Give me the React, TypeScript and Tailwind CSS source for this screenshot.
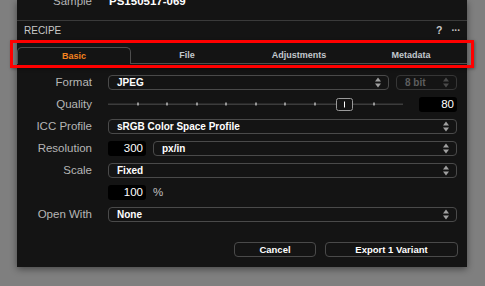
import React from "react";

const Arrows = ({ dim = false }: { dim?: boolean }) => (
  <svg width="6" height="11" viewBox="0 0 6 11" className="shrink-0">
    <polygon points="0,4.5 3,0.5 6,4.5" fill={dim ? "#4a4a4a" : "#a0a0a0"} />
    <polygon points="0,6.5 3,10.5 6,6.5" fill={dim ? "#4a4a4a" : "#a0a0a0"} />
  </svg>
);

const Select = ({ text, className = "" }: { text: string; className?: string }) => (
  <div
    className={`h-[15px] flex items-center justify-between pl-[8px] pr-[7px] border border-[#4a4a4a] rounded-[4px] text-white font-bold text-[10px] leading-none ${className}`}
  >
    <span>{text}</span>
    <Arrows />
  </div>
);

const NumBox = ({ text }: { text: string }) => (
  <div className="w-[38px] h-[15px] bg-black rounded-[3px] flex items-center justify-end pr-[3px] text-white text-[11.5px] leading-none">
    {text}
  </div>
);

const Row = ({ label, children }: { label: string; children: React.ReactNode }) => (
  <div className="h-[15px] flex items-center">
    <div className="w-[75px] text-right text-[#b6b6b6] text-[11.5px] leading-none">{label}</div>
    <div className="ml-[16px] w-[349px] flex items-center">{children}</div>
  </div>
);

const Slider = () => {
  const ticks = [1, 2, 3, 4, 5, 6, 7, 9];
  return (
    <svg width="295" height="15" viewBox="0 0 295 15" className="shrink-0">
      <rect x="0" y="6.5" width="295" height="1.5" fill="#3c3c3c" />
      {ticks.map((t) => (
        <rect key={t} x={Math.round(t * 29.5) - 0.5} y="5.5" width="1" height="3" fill="#ffffff" />
      ))}
      <rect x="228.5" y="1.5" width="16" height="12" rx="2" fill="#141414" stroke="#9a9a9a" strokeWidth="1" />
      <rect x="236" y="4.5" width="1" height="6" fill="#ffffff" />
    </svg>
  );
};

export default function App() {
  const tabs = ["Basic", "File", "Adjustments", "Metadata"];
  return (
    <div className="w-[485px] h-[286px] bg-[#7f7f7f] relative overflow-hidden font-['Liberation_Sans',Arial,sans-serif]">
      <div className="ml-[17px] w-[450px] h-[267px] bg-[#141414] shadow-[0_2px_7px_rgba(0,0,0,0.45)] flex flex-col">
        {/* Sample row */}
        <div className="h-[21px] border-b border-[#3a3a3a] flex items-start">
          <div className="-mt-[5px] flex items-center h-[14px] leading-none">
            <div className="w-[75px] text-right text-[#b6b6b6] text-[11.5px]">Sample</div>
            <div className="ml-[17px] text-white font-bold text-[11.5px]">PS150517-069</div>
          </div>
        </div>
        {/* Header */}
        <div className="h-[19px] flex items-center justify-between pl-[7px] pr-[7px]">
          <span className="text-[#c8c8c8] text-[10px] leading-none">RECIPE</span>
          <div className="flex items-center gap-[9px] text-[#c8c8c8] font-bold leading-none">
            <span className="text-[10.5px]">?</span>
            <span className="text-[10px] tracking-[-0.5px]">···</span>
          </div>
        </div>
        {/* Tabs */}
        <div className="h-[24px] pt-[7px] flex">
          {tabs.map((t, i) =>
            i === 0 ? (
              <div
                key={t}
                className="flex-1 h-[17px] border-t border-l border-r border-[#4e4e4e] rounded-t-[5px] flex items-center justify-center text-[#f5831f] font-bold text-[9px] leading-none"
              >
                {t}
              </div>
            ) : (
              <div
                key={t}
                className="flex-1 h-[17px] border-b border-[#4e4e4e] flex items-center justify-center text-[#c2c8ce] font-bold text-[9px] leading-none pt-[1px]"
              >
                {t}
              </div>
            )
          )}
        </div>
        {/* Form */}
        <div className="mt-[11px] flex flex-col gap-[7px]">
          <Row label="Format">
            <Select text="JPEG" className="w-[281px]" />
            <div className="ml-[7px] w-[61px] h-[15px] flex items-center justify-between pl-[8px] pr-[7px] border border-[#363636] rounded-[4px] text-[#5e5e5e] font-bold text-[10px] leading-none">
              <span>8 bit</span>
              <Arrows dim />
            </div>
          </Row>
          <Row label="Quality">
            <Slider />
            <div className="ml-[16px]">
              <NumBox text="80" />
            </div>
          </Row>
          <Row label="ICC Profile">
            <Select text="sRGB Color Space Profile" className="w-full" />
          </Row>
          <Row label="Resolution">
            <NumBox text="300" />
            <Select text="px/in" className="ml-[7px] flex-1" />
          </Row>
          <Row label="Scale">
            <Select text="Fixed" className="w-full" />
          </Row>
          <Row label="">
            <NumBox text="100" />
            <span className="ml-[7px] text-[#c0c0c0] text-[11.5px] leading-none">%</span>
          </Row>
          <Row label="Open With">
            <Select text="None" className="w-full" />
          </Row>
        </div>
        {/* Buttons */}
        <div className="mt-[20px] flex justify-end gap-[9px] pr-[9px]">
          <div className="w-[82px] h-[15px] border border-[#4a4a4a] rounded-[4px] flex items-center justify-center text-white font-bold text-[9.5px] leading-none">
            Cancel
          </div>
          <div className="w-[133px] h-[15px] border border-[#4a4a4a] rounded-[4px] flex items-center justify-center text-white font-bold text-[9.5px] leading-none">
            Export 1 Variant
          </div>
        </div>
      </div>
      {/* Annotation box */}
      <div className="absolute left-[10px] top-[40px] w-[464px] h-[28px] border-[3px] border-[#ff0000] shadow-[1px_1px_3px_rgba(0,0,0,0.35)]" />
    </div>
  );
}
